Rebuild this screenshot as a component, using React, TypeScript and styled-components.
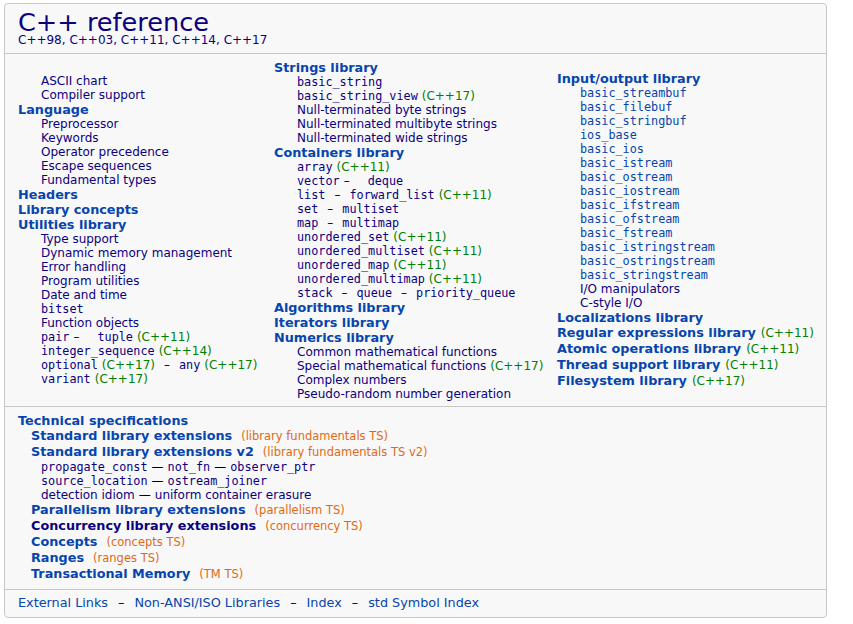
import React from "react";
import styled, { createGlobalStyle } from "styled-components";

const VISITED = "#0b0080";
const LINK = "#0645ad";
const SANS = `"DejaVu Sans", "Liberation Sans", sans-serif`;
const MONO = `"DejaVu Sans Mono", "Liberation Mono", monospace`;

const GlobalStyle = createGlobalStyle`
  html, body { margin: 0; padding: 0; background: #ffffff; }
  body { font-family: ${SANS}; color: #000; }
`;

const Page = styled.div`
  padding: 3px 0 0 4px;
`;

const Box = styled.div`
  width: 823px;
  box-sizing: border-box;
  border: 1px solid #c8c8c8;
  border-radius: 4px;
  background: #f8f8f8;
`;

const Header = styled.div`
  padding: 7px 13px 6px;
  border-bottom: 1px solid #c8c8c8;
`;

const Title = styled.div`
  font-size: 25.6px;
  line-height: 22px;
  color: ${VISITED};
`;

const Versions = styled.div`
  font-size: 12px;
  line-height: 14px;
  color: ${VISITED};
`;

const Columns = styled.div`
  display: grid;
  grid-template-columns: 256px 283px 1fr;
  padding: 0 0 5px 13px;
  border-bottom: 1px solid #c8c8c8;
`;

const Column = styled.div<{ $top: number }>`
  padding-top: ${(p) => p.$top}px;
  white-space: nowrap;
`;

const Heading = styled.div<{ $indent?: number; $tall?: boolean }>`
  font-weight: bold;
  font-size: 12.8px;
  line-height: ${(p) => (p.$tall ? 16 : 15)}px;
  padding-left: ${(p) => p.$indent ?? 0}px;
  white-space: nowrap;
`;

const Item = styled.div<{ $indent?: number }>`
  font-size: 12px;
  line-height: 14px;
  padding-left: ${(p) => p.$indent ?? 23}px;
  white-space: nowrap;
`;

const Link = styled.a<{ $visited?: boolean; $mono?: boolean }>`
  color: ${(p) => (p.$visited ? VISITED : LINK)};
  text-decoration: none;
  font-family: ${(p) => (p.$mono ? MONO : "inherit")};
  font-size: ${(p) => (p.$mono ? "11.8px" : "inherit")};
`;

const Rev = styled.span<{ $gap?: number }>`
  color: #008000;
  font-size: 12px;
  font-weight: normal;
  margin-left: ${(p) => p.$gap ?? 4}px;
`;

const TsMark = styled.span`
  color: #e06a14;
  font-size: 11.5px;
  font-weight: normal;
  margin-left: 9px;
`;

const Dash = styled.span<{ $wide?: boolean }>`
  display: inline-block;
  margin: ${(p) => (p.$wide ? "0 18px 0 4px" : "0 9px")};
`;

const EmDash = styled.span`
  margin: 0 4px;
`;

const Specs = styled.div`
  padding: 6px 0 7px 13px;
  border-bottom: 1px solid #c8c8c8;
`;

const Footer = styled.div`
  padding: 5px 13px 6px;
  font-size: 12.8px;
  line-height: 16px;
`;

const FooterDash = styled.span`
  margin: 0 10px;
`;

const versions = ["C++98", "C++03", "C++11", "C++14", "C++17"];

export default function App() {
  return (
    <>
      <GlobalStyle />
      <Page>
        <Box>
          <Header>
            <Title>C++ reference</Title>
            <Versions>
              {versions.map((v, i) => (
                <React.Fragment key={v}>
                  {i > 0 && ", "}
                  <Link $visited>{v}</Link>
                </React.Fragment>
              ))}
            </Versions>
          </Header>

          <Columns>
            <Column $top={20}>
              <Item><Link $visited>ASCII chart</Link></Item>
              <Item><Link $visited>Compiler support</Link></Item>
              <Heading><Link>Language</Link></Heading>
              <Item><Link $visited>Preprocessor</Link></Item>
              <Item><Link $visited>Keywords</Link></Item>
              <Item><Link $visited>Operator precedence</Link></Item>
              <Item><Link $visited>Escape sequences</Link></Item>
              <Item><Link $visited>Fundamental types</Link></Item>
              <Heading><Link>Headers</Link></Heading>
              <Heading><Link>Library concepts</Link></Heading>
              <Heading><Link>Utilities library</Link></Heading>
              <Item><Link $visited>Type support</Link></Item>
              <Item><Link $visited>Dynamic memory management</Link></Item>
              <Item><Link $visited>Error handling</Link></Item>
              <Item><Link $visited>Program utilities</Link></Item>
              <Item><Link $visited>Date and time</Link></Item>
              <Item><Link $visited $mono>bitset</Link></Item>
              <Item><Link $visited>Function objects</Link></Item>
              <Item>
                <Link $visited $mono>pair</Link>
                <Dash $wide>–</Dash>
                <Link $visited $mono>tuple</Link>
                <Rev>(C++11)</Rev>
              </Item>
              <Item>
                <Link $visited $mono>integer_sequence</Link>
                <Rev>(C++14)</Rev>
              </Item>
              <Item>
                <Link $visited $mono>optional</Link>
                <Rev>(C++17)</Rev>
                <Dash>–</Dash>
                <Link $visited $mono>any</Link>
                <Rev>(C++17)</Rev>
              </Item>
              <Item>
                <Link $visited $mono>variant</Link>
                <Rev>(C++17)</Rev>
              </Item>
            </Column>

            <Column $top={6}>
              <Heading><Link>Strings library</Link></Heading>
              <Item><Link $visited $mono>basic_string</Link></Item>
              <Item>
                <Link $visited $mono>basic_string_view</Link>
                <Rev>(C++17)</Rev>
              </Item>
              <Item><Link $visited>Null-terminated byte strings</Link></Item>
              <Item><Link $visited>Null-terminated multibyte strings</Link></Item>
              <Item><Link $visited>Null-terminated wide strings</Link></Item>
              <Heading><Link>Containers library</Link></Heading>
              <Item>
                <Link $visited $mono>array</Link>
                <Rev>(C++11)</Rev>
              </Item>
              <Item>
                <Link $visited $mono>vector</Link>
                <Dash $wide>–</Dash>
                <Link $visited $mono>deque</Link>
              </Item>
              <Item>
                <Link $visited $mono>list</Link>
                <Dash>–</Dash>
                <Link $visited $mono>forward_list</Link>
                <Rev>(C++11)</Rev>
              </Item>
              <Item>
                <Link $visited $mono>set</Link>
                <Dash>–</Dash>
                <Link $visited $mono>multiset</Link>
              </Item>
              <Item>
                <Link $visited $mono>map</Link>
                <Dash>–</Dash>
                <Link $visited $mono>multimap</Link>
              </Item>
              <Item>
                <Link $visited $mono>unordered_set</Link>
                <Rev>(C++11)</Rev>
              </Item>
              <Item>
                <Link $visited $mono>unordered_multiset</Link>
                <Rev>(C++11)</Rev>
              </Item>
              <Item>
                <Link $visited $mono>unordered_map</Link>
                <Rev>(C++11)</Rev>
              </Item>
              <Item>
                <Link $visited $mono>unordered_multimap</Link>
                <Rev>(C++11)</Rev>
              </Item>
              <Item>
                <Link $visited $mono>stack</Link>
                <Dash>–</Dash>
                <Link $visited $mono>queue</Link>
                <Dash>–</Dash>
                <Link $visited $mono>priority_queue</Link>
              </Item>
              <Heading><Link>Algorithms library</Link></Heading>
              <Heading><Link>Iterators library</Link></Heading>
              <Heading><Link>Numerics library</Link></Heading>
              <Item><Link $visited>Common mathematical functions</Link></Item>
              <Item>
                <Link $visited>Special mathematical functions</Link>
                <Rev>(C++17)</Rev>
              </Item>
              <Item><Link $visited>Complex numbers</Link></Item>
              <Item><Link $visited>Pseudo-random number generation</Link></Item>
            </Column>

            <Column $top={17}>
              <Heading><Link>Input/output library</Link></Heading>
              {[
                "basic_streambuf",
                "basic_filebuf",
                "basic_stringbuf",
                "ios_base",
                "basic_ios",
                "basic_istream",
                "basic_ostream",
                "basic_iostream",
                "basic_ifstream",
                "basic_ofstream",
                "basic_fstream",
                "basic_istringstream",
                "basic_ostringstream",
                "basic_stringstream",
              ].map((n) => (
                <Item key={n}><Link $mono>{n}</Link></Item>
              ))}
              <Item><Link $visited>I/O manipulators</Link></Item>
              <Item><Link $visited>C-style I/O</Link></Item>
              <Heading><Link>Localizations library</Link></Heading>
              <Heading $tall>
                <Link>Regular expressions library</Link>
                <Rev $gap={5}>(C++11)</Rev>
              </Heading>
              <Heading $tall>
                <Link>Atomic operations library</Link>
                <Rev $gap={5}>(C++11)</Rev>
              </Heading>
              <Heading $tall>
                <Link>Thread support library</Link>
                <Rev $gap={5}>(C++11)</Rev>
              </Heading>
              <Heading $tall>
                <Link>Filesystem library</Link>
                <Rev $gap={5}>(C++17)</Rev>
              </Heading>
            </Column>
          </Columns>

          <Specs>
            <Heading><Link>Technical specifications</Link></Heading>
            <Heading $indent={13} $tall>
              <Link>Standard library extensions</Link>
              <TsMark>(library fundamentals TS)</TsMark>
            </Heading>
            <Heading $indent={13} $tall>
              <Link>Standard library extensions v2</Link>
              <TsMark>(library fundamentals TS v2)</TsMark>
            </Heading>
            <Item>
              <Link $visited $mono>propagate_const</Link>
              <EmDash>—</EmDash>
              <Link $visited $mono>not_fn</Link>
              <EmDash>—</EmDash>
              <Link $visited $mono>observer_ptr</Link>
            </Item>
            <Item>
              <Link $visited $mono>source_location</Link>
              <EmDash>—</EmDash>
              <Link $visited $mono>ostream_joiner</Link>
            </Item>
            <Item>
              <Link $visited>detection idiom</Link>
              <EmDash>—</EmDash>
              <Link $visited>uniform container erasure</Link>
            </Item>
            <Heading $indent={13} $tall>
              <Link>Parallelism library extensions</Link>
              <TsMark>(parallelism TS)</TsMark>
            </Heading>
            <Heading $indent={13} $tall>
              <Link $visited>Concurrency library extensions</Link>
              <TsMark>(concurrency TS)</TsMark>
            </Heading>
            <Heading $indent={13} $tall>
              <Link>Concepts</Link>
              <TsMark>(concepts TS)</TsMark>
            </Heading>
            <Heading $indent={13} $tall>
              <Link>Ranges</Link>
              <TsMark>(ranges TS)</TsMark>
            </Heading>
            <Heading $indent={13} $tall>
              <Link>Transactional Memory</Link>
              <TsMark>(TM TS)</TsMark>
            </Heading>
          </Specs>

          <Footer>
            <Link>External Links</Link>
            <FooterDash>–</FooterDash>
            <Link>Non-ANSI/ISO Libraries</Link>
            <FooterDash>–</FooterDash>
            <Link>Index</Link>
            <FooterDash>–</FooterDash>
            <Link>std Symbol Index</Link>
          </Footer>
        </Box>
      </Page>
    </>
  );
}
